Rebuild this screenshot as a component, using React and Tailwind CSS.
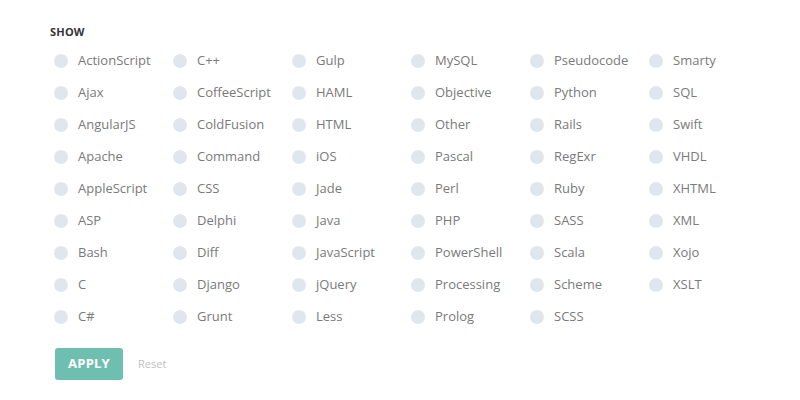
const columns = [
  ["ActionScript", "Ajax", "AngularJS", "Apache", "AppleScript", "ASP", "Bash", "C", "C#"],
  ["C++", "CoffeeScript", "ColdFusion", "Command", "CSS", "Delphi", "Diff", "Django", "Grunt"],
  ["Gulp", "HAML", "HTML", "iOS", "Jade", "Java", "JavaScript", "jQuery", "Less"],
  ["MySQL", "Objective", "Other", "Pascal", "Perl", "PHP", "PowerShell", "Processing", "Prolog"],
  ["Pseudocode", "Python", "Rails", "RegExr", "Ruby", "SASS", "Scala", "Scheme", "SCSS"],
  ["Smarty", "SQL", "Swift", "VHDL", "XHTML", "XML", "Xojo", "XSLT"],
];

export default function App() {
  return (
    <div className="w-[800px] h-[400px] bg-white pl-[50px] pt-[26px] font-['Open_Sans',sans-serif]">
      {/* Heading */}
      <h3 className="text-[11px] font-bold text-[#333] leading-[12px] tracking-[0.2px]">SHOW</h3>

      {/* Options */}
      <div className="mt-[7px] ml-[4px] flex">
        {columns.map((col, i) => (
          <div key={i} className="w-[119px] flex flex-col">
            {col.map((name) => (
              <label key={name} className="h-[32px] flex items-center cursor-pointer">
                <span className="w-[14px] h-[14px] rounded-full bg-[#dfe6ed] shrink-0" />
                <span className="ml-[10px] text-[13px] text-[#7a7a7a] whitespace-nowrap">{name}</span>
              </label>
            ))}
          </div>
        ))}
      </div>

      {/* Actions */}
      <div className="mt-[15px] ml-[5px] flex items-center">
        <button className="w-[68px] h-[32px] rounded-[3px] bg-[#6fbfb0] text-white text-[13px] font-bold tracking-[0.2px]">
          APPLY
        </button>
        <button className="ml-[15px] text-[11px] text-[#c0c0c0]">Reset</button>
      </div>
    </div>
  );
}
